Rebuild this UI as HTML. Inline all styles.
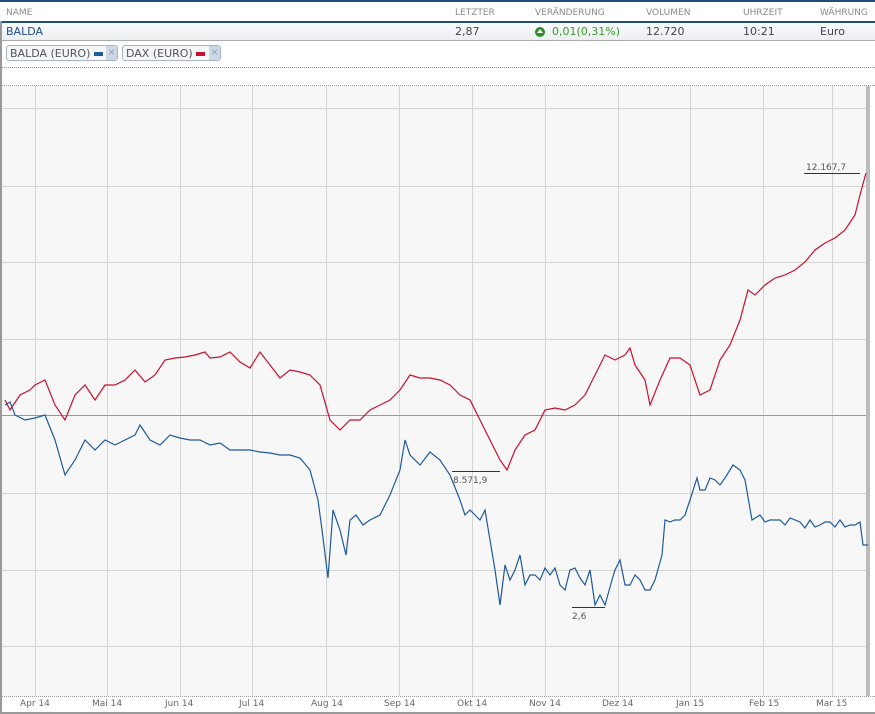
<!DOCTYPE html>
<html><head><meta charset="utf-8"><style>
body{margin:0;width:875px;height:714px;overflow:hidden;background:#fff;font-family:"DejaVu Sans","Liberation Sans",sans-serif;position:relative}
.t{position:absolute;font-size:9px;color:#8a8a8a;top:8px}
.v{position:absolute;font-size:11px;color:#444;top:25px}
.tag{position:absolute;top:45px;height:16px;border:1px solid #a8b4c4;border-radius:3px;background:#f4f6f9;font-size:11px;color:#555;line-height:16px;padding-left:3px;box-sizing:border-box}
.x{position:absolute;right:0;top:0;width:11px;height:14px;background:#cdd8e6;color:#8899aa;font-size:9px;text-align:center;line-height:14px}
.ax{position:absolute;top:699px;font-size:9px;color:#666}
</style></head><body>
<div style="position:absolute;left:0;top:0;width:875px;height:2px;background:#1f4e79"></div>
<div class="t" style="left:6px">NAME</div>
<div class="t" style="left:455px">LETZTER</div>
<div class="t" style="left:535px">VERÄNDERUNG</div>
<div class="t" style="left:646px">VOLUMEN</div>
<div class="t" style="left:743px">UHRZEIT</div>
<div class="t" style="left:820px">WÄHRUNG</div>
<div style="position:absolute;left:0;top:21px;width:875px;height:20px;background:linear-gradient(#fafbfc,#eceef0);border-top:2px solid #1f4e79;border-bottom:1px solid #aaa;box-sizing:border-box"></div>
<div style="position:absolute;left:0;top:21px;width:2px;height:693px;background:#999"></div>
<div class="v" style="left:6px;color:#1f4e8a">BALDA</div>
<div class="v" style="left:455px">2,87</div>
<div style="position:absolute;left:535px;top:27px;width:10px;height:10px;border-radius:50%;background:#2e8b2e"></div>
<div style="position:absolute;left:537px;top:29px;width:0;height:0;border-left:3px solid transparent;border-right:3px solid transparent;border-bottom:4px solid #fff"></div>
<div class="v" style="left:552px;color:#3a9a2a">0,01(0,31%)</div>
<div class="v" style="left:646px">12.720</div>
<div class="v" style="left:743px">10:21</div>
<div class="v" style="left:820px">Euro</div>
<div class="tag" style="left:6px;width:112px">BALDA (EURO) <span style="display:inline-block;width:9px;height:4px;background:#1f5a9a;vertical-align:middle"></span><div class="x">×</div></div>
<div class="tag" style="left:122px;width:99px">DAX (EURO) <span style="display:inline-block;width:9px;height:4px;background:#c8102e;vertical-align:middle"></span><div class="x">×</div></div>
<div style="position:absolute;left:2px;top:67px;width:873px;border-top:1px dotted #999"></div>
<div style="position:absolute;left:2px;top:85px;width:873px;border-top:1px dotted #999"></div>
<div style="position:absolute;left:2px;top:86px;width:866px;height:610px;background:#f7f7f7"></div>
<div style="position:absolute;left:2px;top:696px;width:873px;border-top:1px dotted #999"></div>
<div style="position:absolute;left:0;top:712px;width:875px;height:2px;background:#999"></div>
<div style="position:absolute;left:866px;top:86px;width:4px;height:610px;background:#bbb"></div>
<svg width="875" height="714" style="position:absolute;left:0;top:0">
<g stroke="#d4d4d4" stroke-width="1">
<path d="M35.5 86V696M107.5 86V696M180.5 86V696M252.5 86V696M326.5 86V696M399.5 86V696M472.5 86V696M545.5 86V696M618.5 86V696M690.5 86V696M763.5 86V696M832.5 86V696"/>
<path d="M2 108.5H866M2 186.5H866M2 262.5H866M2 339.5H866M2 493.5H866M2 570.5H866M2 646.5H866"/>
</g>
<path d="M2 415.5H866" stroke="#999"/>
<polyline fill="none" stroke="#c8102e" stroke-width="1.2" points="5,400 10,410 20,395 30,390 35,385 45,380 55,405 65,420 75,395 85,385 95,400 105,385 115,385 125,380 135,370 145,382 155,375 165,360 175,358 185,357 195,355 205,352 210,358 220,357 230,352 240,362 250,368 260,352 270,365 280,378 290,370 300,372 310,375 320,385 330,420 340,430 350,420 360,420 370,410 380,405 390,400 400,390 410,375 420,378 430,378 440,380 450,385 460,395 470,400 480,420 490,440 500,460 507,470 515,450 525,435 535,430 545,410 555,408 565,410 575,405 585,395 595,375 605,355 615,360 625,355 630,348 635,365 645,380 650,405 660,380 670,358 680,358 690,365 700,395 710,390 720,360 730,345 740,320 748,290 755,295 765,285 775,278 785,275 795,270 805,262 815,250 825,243 835,238 845,230 855,215 860,195 866,173"/>
<polyline fill="none" stroke="#1f5a9a" stroke-width="1.2" points="5,405 10,402 15,415 25,420 35,418 45,415 55,440 65,475 75,460 85,440 95,450 105,440 115,445 125,440 135,435 140,425 150,440 160,445 170,435 180,438 190,440 200,440 210,445 220,443 230,450 240,450 250,450 260,452 270,453 280,455 290,455 300,458 310,470 318,500 322,530 328,578 333,510 340,530 346,555 350,520 356,515 363,525 370,520 380,515 390,495 400,470 405,440 410,455 420,465 430,452 440,460 450,475 460,500 465,515 470,510 475,515 480,520 485,510 490,540 495,570 500,605 505,565 510,580 515,570 520,555 525,585 530,575 535,575 540,580 545,568 550,575 555,568 560,585 565,590 570,570 575,568 580,578 585,585 590,570 595,605 600,595 605,605 612,580 615,570 620,560 625,585 630,585 635,575 640,580 645,590 650,590 655,580 662,555 665,520 670,522 675,520 680,520 685,515 690,500 697,478 700,490 705,490 710,478 715,480 720,485 725,478 733,465 740,470 745,480 752,520 760,515 765,522 770,520 780,520 785,525 790,518 800,522 805,528 810,520 815,527 820,525 825,522 830,522 835,527 840,520 845,527 850,525 855,525 860,522 863,545 868,545"/>
<g stroke="#333" stroke-width="1"><path d="M804 173.5H860M452 471.5H500M572 607.5H605"/></g>
<g font-family="DejaVu Sans,sans-serif" font-size="9" fill="#555">
<text x="806" y="170">12.167,7</text><text x="453" y="483">8.571,9</text><text x="572" y="619">2,6</text>
</g>
</svg>
<div class="ax" style="left:20px">Apr 14</div>
<div class="ax" style="left:92px">Mai 14</div>
<div class="ax" style="left:165px">Jun 14</div>
<div class="ax" style="left:239px">Jul 14</div>
<div class="ax" style="left:311px">Aug 14</div>
<div class="ax" style="left:384px">Sep 14</div>
<div class="ax" style="left:457px">Okt 14</div>
<div class="ax" style="left:529px">Nov 14</div>
<div class="ax" style="left:602px">Dez 14</div>
<div class="ax" style="left:676px">Jan 15</div>
<div class="ax" style="left:749px">Feb 15</div>
<div class="ax" style="left:816px">Mar 15</div>
</body></html>
